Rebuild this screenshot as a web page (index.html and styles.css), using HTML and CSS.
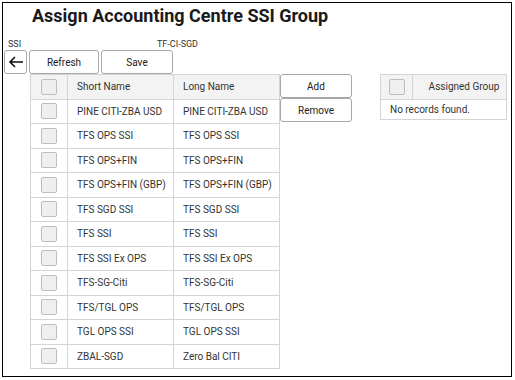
FILE: index.html
```html
<!DOCTYPE html>
<html lang="en">
<head>
    <meta charset="UTF-8">
    <title>Assign Accounting Centre SSI Group</title>
    <link rel="stylesheet" href="styles.css">
</head>
<body>
    <div class="frame">
        <div class="title">Assign Accounting Centre SSI Group</div>

        <div class="info-row">
            <span class="info-ssi">SSI</span>
            <span class="info-code">TF-CI-SGD</span>
        </div>

        <div class="toolbar">
            <button class="btn btn-back" title="Back">
                <svg width="16" height="12" viewBox="0 0 16 12">
                    <path d="M15 6H2M7 1L2 6l5 5" fill="none" stroke="#111" stroke-width="1.6"/>
                </svg>
            </button>
            <button class="btn btn-refresh">Refresh</button>
            <button class="btn btn-save">Save</button>
        </div>

        <div class="main">
            <table class="grid grid-available">
                <thead>
                    <tr>
                        <th class="col-check"><span class="check"></span></th>
                        <th class="col-short">Short Name</th>
                        <th class="col-long">Long Name</th>
                    </tr>
                </thead>
                <tbody>
                    <tr><td class="col-check"><span class="check"></span></td><td>PINE CITI-ZBA USD</td><td>PINE CITI-ZBA USD</td></tr>
                    <tr><td class="col-check"><span class="check"></span></td><td>TFS OPS SSI</td><td>TFS OPS SSI</td></tr>
                    <tr><td class="col-check"><span class="check"></span></td><td>TFS OPS+FIN</td><td>TFS OPS+FIN</td></tr>
                    <tr><td class="col-check"><span class="check"></span></td><td>TFS OPS+FIN (GBP)</td><td>TFS OPS+FIN (GBP)</td></tr>
                    <tr><td class="col-check"><span class="check"></span></td><td>TFS SGD SSI</td><td>TFS SGD SSI</td></tr>
                    <tr><td class="col-check"><span class="check"></span></td><td>TFS SSI</td><td>TFS SSI</td></tr>
                    <tr><td class="col-check"><span class="check"></span></td><td>TFS SSI Ex OPS</td><td>TFS SSI Ex OPS</td></tr>
                    <tr><td class="col-check"><span class="check"></span></td><td>TFS-SG-Citi</td><td>TFS-SG-Citi</td></tr>
                    <tr><td class="col-check"><span class="check"></span></td><td>TFS/TGL OPS</td><td>TFS/TGL OPS</td></tr>
                    <tr><td class="col-check"><span class="check"></span></td><td>TGL OPS SSI</td><td>TGL OPS SSI</td></tr>
                    <tr><td class="col-check"><span class="check"></span></td><td>ZBAL-SGD</td><td>Zero Bal CITI</td></tr>
                </tbody>
            </table>

            <div class="actions">
                <button class="btn btn-action">Add</button>
                <button class="btn btn-action">Remove</button>
            </div>

            <table class="grid grid-assigned">
                <thead>
                    <tr>
                        <th class="col-check-sm"><span class="check"></span></th>
                        <th class="col-group">Assigned Group</th>
                    </tr>
                </thead>
                <tbody>
                    <tr><td class="empty" colspan="2">No records found.</td></tr>
                </tbody>
            </table>
        </div>
    </div>
</body>
</html>
```

FILE: styles.css
```css
/* General */
body {
    margin: 0;
    font-family: Roboto, Arial, sans-serif;
    background-color: #FFFFFF;
    color: #333333;
}

.frame {
    box-sizing: border-box;
    margin: 2px 0 0 2px;
    width: 510px;
    height: 375px;
    border: 1px solid #000000;
    padding: 0 0 0 1px;
}

.title {
    font-size: 18px;
    font-weight: bold;
    color: #1a1a1a;
    padding: 2px 0 0 28px;
    height: 28px;
    line-height: 22px;
}

.info-row {
    display: flex;
    font-size: 9px;
    height: 12px;
    line-height: 12px;
    color: #333333;
    margin-top: 5px;
}

.info-ssi {
    width: 149px;
    padding-left: 4px;
}

/* Toolbar buttons */
.toolbar {
    display: flex;
    gap: 2px;
    height: 23px;
}

.btn {
    box-sizing: border-box;
    font-family: Roboto, Arial, sans-serif;
    font-size: 10px;
    color: #222222;
    background-color: #FFFFFF;
    border: 1px solid #A8A8A8;
    border-radius: 3px;
    padding: 0;
    cursor: pointer;
}

.btn-back {
    width: 23px;
    height: 24px;
    display: flex;
    align-items: center;
    justify-content: center;
}

.btn-refresh {
    width: 70px;
    height: 24px;
}

.btn-save {
    width: 72px;
    height: 24px;
}

/* Tables */
.main {
    display: flex;
    align-items: flex-start;
    padding-left: 26px;
    margin-top: 1px;
}

.grid {
    border-collapse: collapse;
    font-size: 10px;
    color: #333333;
}

.grid th,
.grid td {
    border: 1px solid #D4D4D4;
    height: 23.5px;
    padding: 0 0 0 9px;
    text-align: left;
    font-weight: normal;
    white-space: nowrap;
}

.grid th {
    background-color: #F3F3F3;
}

.grid .col-check,
.grid .col-check-sm {
    padding: 0;
    text-align: center;
}

.col-check {
    width: 36px;
}

.col-short {
    width: 96px;
}

.col-long {
    width: 96px;
}

.check {
    display: inline-block;
    box-sizing: border-box;
    width: 16px;
    height: 16px;
    border: 1px solid #BDBDBD;
    border-radius: 2px;
    background-color: #EFEFEF;
    vertical-align: middle;
}

.actions {
    display: flex;
    flex-direction: column;
    width: 72px;
}

.btn-action {
    height: 24px;
    width: 72px;
}

.grid-assigned {
    margin-left: 28px;
}

.col-check-sm {
    width: 31px;
}

.grid-assigned .col-group {
    width: 84px;
    text-align: center;
}

.grid-assigned .empty {
    height: 19px;
    padding-left: 9px;
}
```
